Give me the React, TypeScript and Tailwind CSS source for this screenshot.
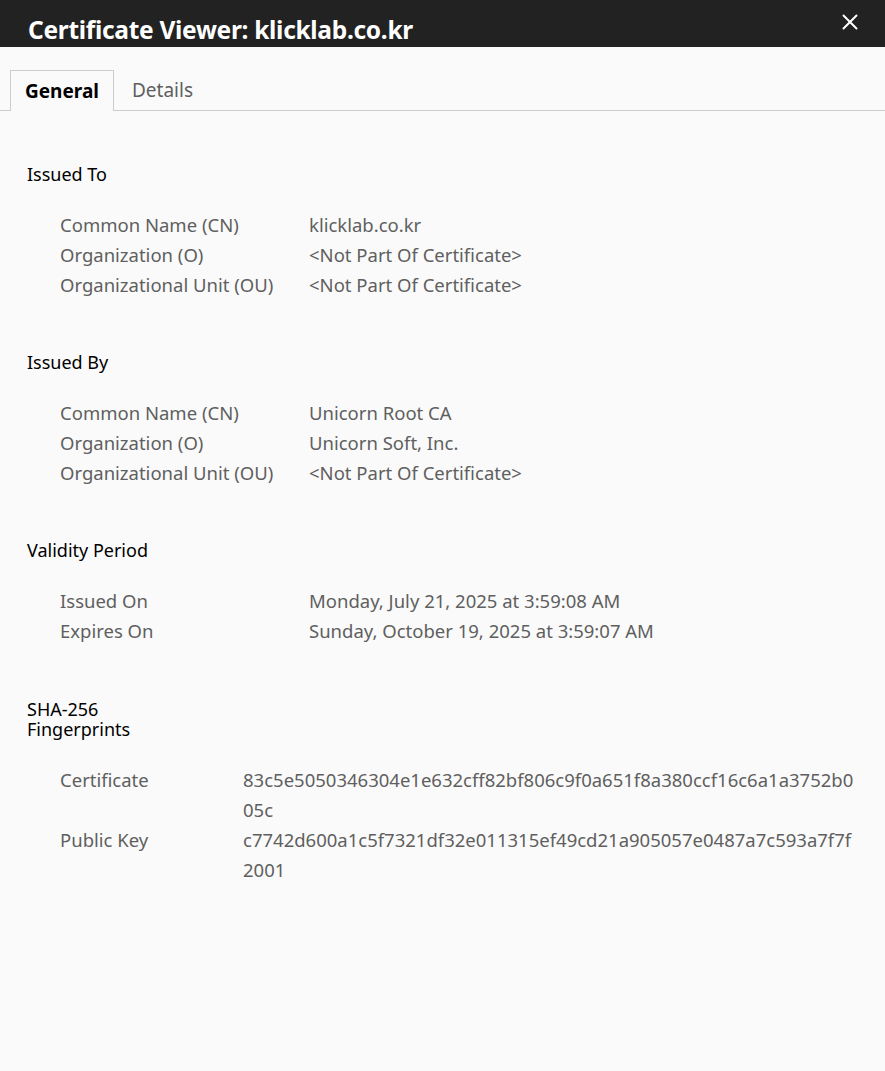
import { X } from "lucide-react"

const sections = [
  {
    title: "Issued To",
    rows: [
      ["Common Name (CN)", "klicklab.co.kr"],
      ["Organization (O)", "<Not Part Of Certificate>"],
      ["Organizational Unit (OU)", "<Not Part Of Certificate>"],
    ],
  },
  {
    title: "Issued By",
    rows: [
      ["Common Name (CN)", "Unicorn Root CA"],
      ["Organization (O)", "Unicorn Soft, Inc."],
      ["Organizational Unit (OU)", "<Not Part Of Certificate>"],
    ],
  },
  {
    title: "Validity Period",
    rows: [
      ["Issued On", "Monday, July 21, 2025 at 3:59:08 AM"],
      ["Expires On", "Sunday, October 19, 2025 at 3:59:07 AM"],
    ],
  },
]

const fingerprints = [
  ["Certificate", "83c5e5050346304e1e632cff82bf806c9f0a651f8a380ccf16c6a1a3752b005c"],
  ["Public Key", "c7742d600a1c5f7321df32e011315ef49cd21a905057e0487a7c593a7f7f2001"],
]

export default function App() {
  return (
    <div
      className="min-h-[1071px] w-[885px] bg-[#fafafa]"
      style={{ fontFamily: '"Noto Sans", "Open Sans", sans-serif' }}
    >
      <div className="flex h-[47px] items-start justify-between bg-[#222222] pl-[28px] pr-[22px]">
        <h1 className="pt-[15px] text-[24.5px] leading-[30px] font-bold tracking-[-0.3px] text-white">
          Certificate Viewer: klicklab.co.kr
        </h1>
        <X className="mt-[9px] h-[26px] w-[26px] text-white" strokeWidth={1.8} />
      </div>

      <div className="mt-[23px] flex border-b border-[#cccccc] pl-[10px]">
        <div className="-mb-px flex h-[41px] w-[104px] items-center justify-center border border-b-0 border-[#cccccc] bg-[#fafafa] text-[19px] font-bold text-black">
          General
        </div>
        <div className="flex h-[40px] items-center px-[18px] text-[19px] text-[#5f5f5f]">
          Details
        </div>
      </div>

      <div className="pl-[27px] pr-[27px] pt-[49px]">
        {sections.map((s) => (
          <div key={s.title} className="mb-[48px]">
            <h2 className="text-[18px] leading-[28px] text-black">{s.title}</h2>
            <div className="mt-[22px] pl-[33px]">
              {s.rows.map(([label, value]) => (
                <div key={label} className="grid grid-cols-[249px_1fr] text-[18.5px] leading-[30px] text-[#5f5f5f]">
                  <span>{label}</span>
                  <span>{value}</span>
                </div>
              ))}
            </div>
          </div>
        ))}

        <div className="pt-[5px]">
          <h2 className="w-[120px] text-[18px] leading-[20px] text-black">SHA-256 Fingerprints</h2>
          <div className="mt-[26px] pl-[33px]">
            {fingerprints.map(([label, value]) => (
              <div key={label} className="grid grid-cols-[183px_618px] text-[18.5px] leading-[30px] text-[#5f5f5f]">
                <span>{label}</span>
                <span className="break-all">{value}</span>
              </div>
            ))}
          </div>
        </div>
      </div>
    </div>
  )
}
